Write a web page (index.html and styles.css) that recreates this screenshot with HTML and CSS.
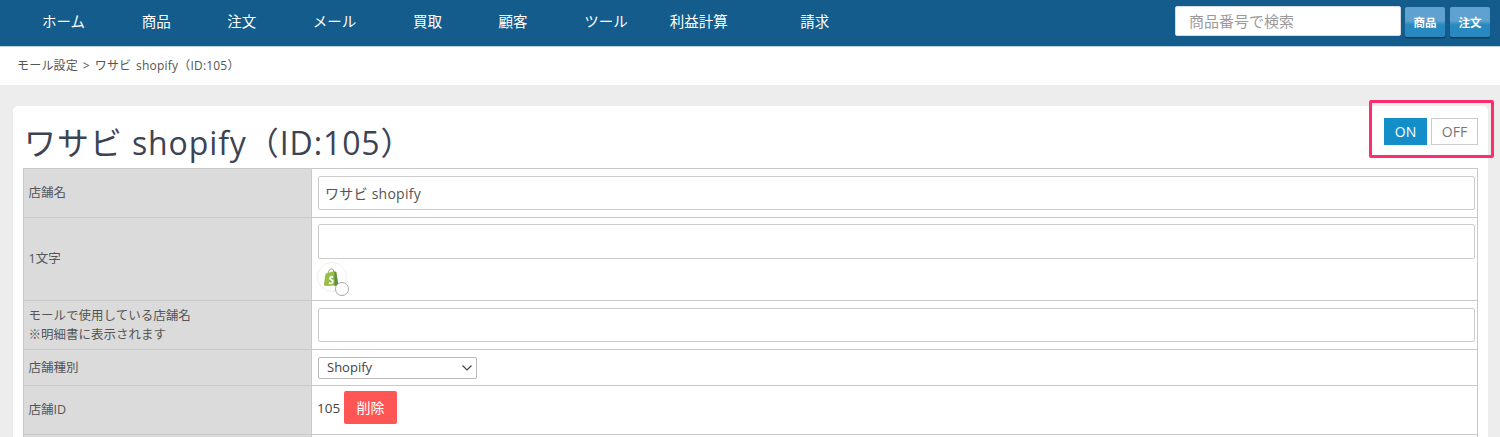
FILE: index.html
```html
<!DOCTYPE html>
<html lang="ja">
<head>
<meta charset="utf-8">
<title>ワサビ shopify</title>
<link rel="stylesheet" href="styles.css">
</head>
<body>
<header class="topbar">
  <nav class="nav">
    <a class="nav-item">ホーム</a>
    <a class="nav-item">商品</a>
    <a class="nav-item">注文</a>
    <a class="nav-item">メール</a>
    <a class="nav-item">買取</a>
    <a class="nav-item">顧客</a>
    <a class="nav-item">ツール</a>
    <a class="nav-item nav-item-profit">利益計算</a>
    <a class="nav-item">請求</a>
  </nav>
  <div class="search">
    <input class="search-input" type="text" placeholder="商品番号で検索">
    <button class="search-btn">商品</button>
    <button class="search-btn">注文</button>
  </div>
</header>
<div class="crumb">モール設定 &gt; ワサビ shopify（ID:105）</div>
<main class="page">
  <section class="card">
    <div class="card-head">
      <h1 class="title">ワサビ shopify（ID:105）</h1>
      <div class="toggle">
        <span class="toggle-on">ON</span>
        <span class="toggle-off">OFF</span>
      </div>
      <div class="highlight"></div>
    </div>
    <table class="form">
      <colgroup><col class="col-label"><col></colgroup>
      <tr class="row-name">
        <th>店舗名</th>
        <td><input class="field" type="text" value="ワサビ shopify"></td>
      </tr>
      <tr class="row-char">
        <th>1文字</th>
        <td>
          <input class="field field-tall" type="text">
          <div class="badge">
            <span class="badge-circle">
              <svg class="shopify" viewBox="0 0 20 22" width="17" height="19">
                <path d="M3 6.5 12.5 3.5 15.5 4.5 18 20 3 21 1 19.5Z" fill="#95bf47"/>
                <path d="M13.5 3.6 15.6 4.6 18 20 13.5 21Z" fill="#5e8e3e"/>
                <path d="M6 6.5C6 3 8 1 10 1s2.5 1.5 2.5 4" fill="none" stroke="#7ea53b" stroke-width="1"/>
                <path d="M11.7 9.6C10.5 9 7.3 9.2 7.2 12c0 2.6 3.4 2.4 3.3 4.2-.1 1.2-2 1-3.4.2l-.5 1.9c1.8 1 5.8.9 6-2.2.1-3-3.3-2.9-3.2-4.1 0-.8 1.3-.9 2.4-.4Z" fill="#fff"/>
              </svg>
            </span>
            <span class="radio"></span>
          </div>
        </td>
      </tr>
      <tr class="row-name">
        <th>モールで使用している店舗名<br>※明細書に表示されます</th>
        <td><input class="field" type="text"></td>
      </tr>
      <tr class="row-type">
        <th>店舗種別</th>
        <td><select class="select"><option>Shopify</option></select></td>
      </tr>
      <tr class="row-name">
        <th>店舗ID</th>
        <td><div class="id-cell"><span class="id-value">105</span><button class="delete">削除</button></div></td>
      </tr>
      <tr class="row-name">
        <th></th>
        <td></td>
      </tr>
    </table>
  </section>
</main>
</body>
</html>
```
FILE: styles.css
```css
* { box-sizing: border-box; }
html, body { height: 437px; overflow: hidden; }
body {
  margin: 0;
  background: #ededed;
  color: #3c4454;
  font-family: "Open Sans", "Noto Sans CJK JP", sans-serif;
}
.topbar {
  height: 47px;
  display: flex;
  align-items: center;
  justify-content: space-between;
  padding: 0 10px 3px 42px;
  background: #145c8c;
  border-bottom: 1px solid #b9d0e2;
}
.nav { display: flex; gap: 56.6px; }
.nav-item { color: #fff; font-size: 14.5px; line-height: 20px; }
.nav-item-profit { margin-left: -14.5px; margin-right: 16px; }
.search { display: flex; align-items: flex-start; gap: 4px; }
.search-input {
  width: 226px;
  height: 30px;
  padding: 0 13px;
  border: 1px solid #d5dde4;
  border-radius: 2px;
  background: #fff;
  font: 15px "Open Sans", "Noto Sans CJK JP", sans-serif;
}
.search-input::placeholder { color: #9a9a9a; opacity: 1; }
.search-btn {
  width: 40px;
  height: 30px;
  margin-top: 1px;
  padding: 0;
  border: 0;
  border-radius: 2px;
  background: linear-gradient(#5fa2cf 0, #5fa2cf 45%, #2789bf 60%, #2789bf 100%);
  box-shadow: 0 1.5px 0 #0d3a55;
  color: #fff;
  font: 700 11.5px "Open Sans", "Noto Sans CJK JP", sans-serif;
}
.search-btn + .search-btn { margin-left: 1px; }
.crumb {
  height: 38px;
  padding-left: 17px;
  background: #fff;
  color: #555;
  font-size: 12px;
  letter-spacing: .2px;
  word-spacing: 1.5px;
  line-height: 37px;
}
.page { padding: 21px 12px 0 13px; }
.card {
  padding: 0 10px;
  background: #fff;
  border-radius: 5px 5px 0 0;
  height: 340px;
}
.card-head {
  position: relative;
  height: 62px;
  display: flex;
  justify-content: space-between;
}
.title {
  margin: 17px 0 0 1px;
  color: #3c4454;
  font-size: 32px;
  font-weight: 400;
  letter-spacing: .9px;
  line-height: 40px;
  white-space: nowrap;
}
.toggle { display: flex; gap: 4px; margin-top: 12px; height: 27px; }
.toggle-on, .toggle-off {
  display: flex;
  align-items: center;
  justify-content: center;
  font-size: 14px;
}
.toggle-on { width: 43px; background: #138ec9; color: #fff; }
.toggle-off { width: 47px; border: 1px solid #ccc; background: #fff; color: #777; }
.highlight {
  position: absolute;
  top: -6px;
  right: -16px;
  width: 125px;
  height: 58px;
  border: 3px solid #ff2d6e;
  border-radius: 2px;
}
.form {
  width: 100%;
  table-layout: fixed;
  border-collapse: collapse;
}
.col-label { width: 288px; }
.form th, .form td { border: 1px solid #c9c9c9; padding: 0; }
.form th {
  padding: 0 0 1px 4.5px;
  background: #dbdbdb;
  color: #555;
  font-size: 12.5px;
  font-weight: 400;
  line-height: 19px;
  text-align: left;
}
.form td { padding: 0 2px 0 6px; }
.row-name { height: 49px; }
.row-char { height: 83px; }
.row-type { height: 36px; }
.field {
  display: block;
  width: 100%;
  height: 34px;
  padding: 0 6px;
  border: 1px solid #ccc;
  border-radius: 2px;
  background: #fff;
  color: #555;
  font: 14px "Open Sans", "Noto Sans CJK JP", sans-serif;
  letter-spacing: .25px;
}
.field-tall { height: 35px; }
.badge { position: relative; width: 32px; height: 32px; margin-top: 3px; margin-left: -1px; }
.badge-circle {
  display: flex;
  align-items: center;
  justify-content: center;
  width: 30px;
  height: 30px;
  border: 1px solid #eee;
  border-radius: 50%;
}
.shopify { margin-right: 1px; }
.radio {
  position: absolute;
  right: 0;
  bottom: -2px;
  width: 14px;
  height: 14px;
  border: 1px solid #aaa;
  border-radius: 50%;
  background: #fff;
}
.select {
  display: block;
  width: 159px;
  height: 22px;
  padding: 0 0 2px 8px;
  border: 1px solid #bbb;
  border-radius: 2px;
  appearance: none;
  background: #fff url("data:image/svg+xml,%3Csvg xmlns='http://www.w3.org/2000/svg' width='10' height='6'%3E%3Cpath d='M.5.5 5 5 9.5.5' fill='none' stroke='%23444' stroke-width='1.2'/%3E%3C/svg%3E") no-repeat right 4px center;
  color: #444;
  font: 13px "Open Sans", "Noto Sans CJK JP", sans-serif;
}
.id-cell { display: flex; align-items: center; gap: 3px; margin: -5px 0 0 -1px; }
.id-value { width: 24px; font-size: 13.5px; color: #444; }
.delete {
  width: 53px;
  height: 33px;
  padding: 0 0 2px;
  border: 0;
  border-radius: 2px;
  background: #ff5555;
  color: #fff;
  font: 14px "Open Sans", "Noto Sans CJK JP", sans-serif;
}
```
